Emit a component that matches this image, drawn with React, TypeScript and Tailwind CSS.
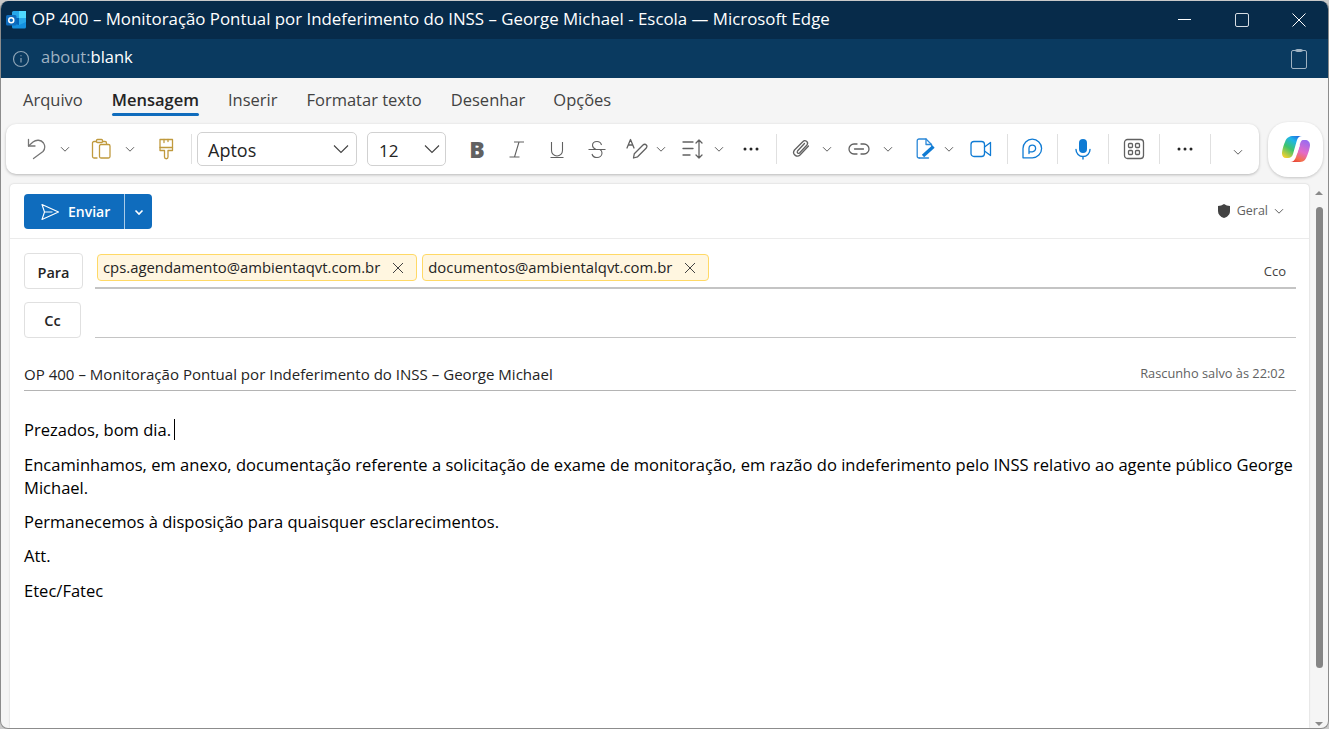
const ui = { fontFamily: '"Open Sans", "Noto Sans", sans-serif' }

function Chev({ className = '' }: { className?: string }) {
  return (
    <svg viewBox="0 0 12 12" className={`w-3 h-3 shrink-0 ${className}`} fill="none" stroke="#616161" strokeWidth="1">
      <path d="M2 4.200 6 8.200 10 4.200" />
    </svg>
  )
}

function BigChev() {
  return (
    <svg viewBox="0 0 16 10" className="w-4 h-[10px] shrink-0" fill="none" stroke="#424242" strokeWidth="1.100">
      <path d="M1 1.500 8 8.500 15 1.500" />
    </svg>
  )
}

function Divider({ className = '' }: { className?: string }) {
  return <div className={`w-px h-[30px] bg-[#e0e0e0] shrink-0 ${className}`} />
}

function Icon({ className = '', children }: { className?: string; children: React.ReactNode }) {
  return (
    <svg viewBox="0 0 22 22" className={`w-[22px] h-[22px] shrink-0 ${className}`} fill="none" stroke="currentColor" strokeWidth="1.300" strokeLinecap="round" strokeLinejoin="round">
      {children}
    </svg>
  )
}

function Dots({ className = '' }: { className?: string }) {
  return (
    <svg viewBox="0 0 20 20" className={`w-5 h-5 shrink-0 ${className}`} fill="#242424">
      <circle cx="4" cy="10" r="1.500" />
      <circle cx="10" cy="10" r="1.500" />
      <circle cx="16" cy="10" r="1.500" />
    </svg>
  )
}

function Chip({ email }: { email: string }) {
  return (
    <div className="h-[27px] flex items-center rounded-[4px] border border-[#ffd966] bg-[#fff6e0] pl-[5px] pr-[12px] text-[14.850px] text-[#242424] whitespace-nowrap">
      <span>{email}</span>
      <svg viewBox="0 0 12 12" className="w-3 h-3 ml-3" fill="none" stroke="#424242" strokeWidth="1">
        <path d="M1 1 11 11M11 1 1 11" />
      </svg>
    </div>
  )
}

function Toolbar() {
  return (
    <div className="ml-[5px] w-[1253px] h-[50px] bg-white rounded-[10px] shadow-[0_1px_3px_rgba(0,0,0,0.25)] flex items-center text-[#616161]">
      <Icon className="ml-5 text-[#757575]">
        <path d="M2.500 1.500V8H9" />
        <path d="M2.500 8 7 4c3-2.500 8-2.500 10.500 1 2 3 1.500 6-.5 8.500L7.500 20.500" />
      </Icon>
      <Chev className="ml-[11px]" />
      <Icon className="ml-[19px] text-[#c09a3e]">
        <path d="M6.500 3.500H4A1.500 1.500 0 0 0 2.500 5v13.500A1.500 1.500 0 0 0 4 20h3" />
        <path d="M12.500 3.500H15A1.500 1.500 0 0 1 16.500 5v1" />
        <rect x="6.500" y="1.500" width="6" height="3" rx="1" />
        <rect x="9.500" y="6.500" width="10.500" height="13.500" rx="1.500" />
      </Icon>
      <Chev className="ml-3" />
      <Icon className="ml-[19px] text-[#c09a3e]">
        <rect x="5" y="1.500" width="12.500" height="8" />
        <path d="M9 1.500v3M13 1.500v2" />
        <path d="M5 9.500v3h4.500v6.500a1.700 1.700 0 0 0 3.500 0v-6.500h4.500v-3" />
      </Icon>
      <Divider className="ml-[14px]" />
      <div className="ml-[5px] w-40 h-[34px] rounded-[5px] border border-[#d1d1d1] flex items-center justify-between pl-[10px] pr-[7px] text-[18px] text-[#242424]">
        <span className="pt-[3px]">Aptos</span>
        <BigChev />
      </div>
      <div className="ml-[10px] w-[79px] h-[34px] rounded-[5px] border border-[#d1d1d1] flex items-center justify-between pl-[11px] pr-[5px] text-[17px] text-[#242424]">
        <span className="pt-[3px]">12</span>
        <BigChev />
      </div>
      <span className="ml-[21px] w-5 text-center text-[23px] leading-none font-extrabold text-[#616161]">B</span>
      <svg viewBox="0 0 20 20" className="ml-5 w-5 h-5 shrink-0" fill="none" stroke="#616161" strokeWidth="1.100">
        <path d="M7 3h10M2.500 18h10M12 3 7.500 18" />
      </svg>
      <svg viewBox="0 0 20 20" className="ml-5 w-5 h-5 shrink-0" fill="none" stroke="#616161" strokeWidth="1.100">
        <path d="M4.500 3v8.500a5.500 5.500 0 0 0 11 0V3M3.500 18.500h13" />
      </svg>
      <svg viewBox="0 0 20 20" className="ml-5 w-5 h-5 shrink-0" fill="none" stroke="#616161" strokeWidth="1.100">
        <path d="M1.500 10.500h17" />
        <path d="M14.500 6C14 4 12 2.500 10 2.500 7 2.500 5.500 4.500 5.500 6.500c0 2 1.500 3 3.500 4M13 10.500c1.500 1 2 2 2 3.500 0 3-2.500 4.500-5 4.500S5.500 17 5 15" />
      </svg>
      <Icon className="ml-[19px] text-[#616161]">
        <path d="M1 10 4.500 1.500 8 10M2.300 7h4.400" />
        <path d="M7.500 20l.8-4.300L17 7c1-1 2.500-1 3.300 0 .8.800.7 2 0 3l-8.700 8.800z" />
      </Icon>
      <Chev className="ml-[7px]" />
      <Icon className="ml-[15px] text-[#616161]">
        <path d="M1 4h10M1 10.500h10M1 17h7" />
        <path d="M17 2v18M14 5l3-3 3 3M14 17l3 3 3-3" />
      </Icon>
      <Chev className="ml-[9px]" />
      <Dots className="ml-4" />
      <Divider className="ml-[15px]" />
      <Icon className="ml-[13px] text-[#616161]">
        <path d="M18.500 8 10 17c-3 3-8.500-1-5.500-5L13 3.500c2-2.200 6 .5 4 3.500L9.500 15c-1.200 1-3-.5-2-2l7-7.500" />
      </Icon>
      <Chev className="ml-[9px]" />
      <Icon className="ml-[15px] text-[#616161]">
        <path d="M9 6H6a5 5 0 0 0 0 10h3M13 6h3a5 5 0 0 1 0 10h-3M6.500 11h9" />
      </Icon>
      <Chev className="ml-3" />
      <Icon className="ml-5 text-[#2b88d8]">
        <path d="M5.500 20H5A1.800 1.800 0 0 1 3.200 18.200V2.800A1.800 1.800 0 0 1 5 1h7l5.500 5.500V8" />
        <path d="M12 1v5.500h5.500" />
        <path d="M5.500 20h9" />
        <path d="M9 18 19.500 8.500" stroke="#0f7bd4" strokeWidth="3.400" strokeLinecap="butt" />
      </Icon>
      <Chev className="ml-[7px]" />
      <Icon className="ml-[15px] text-[#0f7bd4]">
        <rect x="1" y="3.500" width="13.500" height="15" rx="3" />
        <path d="M14.500 9 20.500 4.500v13l-6-4.500" />
      </Icon>
      <Divider className="ml-[15px]" />
      <Icon className="ml-[13px] text-[#0f7bd4]">
        <path d="M2 19.800V10.500a9.300 9.300 0 1 1 9.300 9.300z" />
        <path d="M8 15.500v-5a3.300 3.300 0 1 1 3.300 3.300H8.500" />
      </Icon>
      <Divider className="ml-[14px]" />
      <svg viewBox="0 0 22 22" className="ml-[14px] w-[22px] h-[22px] shrink-0">
        <rect x="7" y="1" width="8" height="14" rx="4" fill="#0f7bd4" />
        <path d="M4 11.500a7 7 0 0 0 14 0M11 18.500V21" fill="none" stroke="#0f7bd4" strokeWidth="1.400" strokeLinecap="round" />
      </svg>
      <Divider className="ml-[14px]" />
      <Icon className="ml-[14px] text-[#616161]">
        <rect x="1.500" y="1.500" width="19" height="19" rx="3" />
        <rect x="5.500" y="5.500" width="4" height="4" rx="1" />
        <rect x="12.500" y="5.500" width="4" height="4" rx="1" />
        <rect x="5.500" y="12.500" width="4" height="4" rx="1" />
        <rect x="12.500" y="12.500" width="4" height="4" rx="1" />
      </Icon>
      <Divider className="ml-[14px]" />
      <Dots className="ml-[15px]" />
      <Divider className="ml-[15px]" />
      <Chev className="ml-[21px] mt-[6px]" />
    </div>
  )
}

function CopilotLogo() {
  return (
    <svg viewBox="0 0 28 26" className="w-7 h-[26px]">
      <defs>
        <linearGradient id="cpLeft" x1="0.800" y1="0" x2="0.200" y2="1">
          <stop offset="0" stopColor="#1f6fe0" />
          <stop offset="0.250" stopColor="#1fb6e8" />
          <stop offset="0.600" stopColor="#3fc46a" />
          <stop offset="1" stopColor="#f2d030" />
        </linearGradient>
        <linearGradient id="cpRight" x1="0.700" y1="0" x2="0.300" y2="1">
          <stop offset="0" stopColor="#9a6cf0" />
          <stop offset="0.500" stopColor="#e46ac8" />
          <stop offset="0.850" stopColor="#f4704c" />
          <stop offset="1" stopColor="#e8483c" />
        </linearGradient>
      </defs>
      <path d="M7 1c1-.7 2-1 3-1h10c-2.500 0-4 1.500-5 4l-4 14c-.7 2.500-2.500 4-5 4H4c-2.500 0-4-2-4-4.500C0 15 1.500 9 3 6c1-3 2-4 4-5z" fill="url(#cpLeft)" />
      <path d="M21 4h2c3 0 5 2 5 5 0 2-1.500 8-3 11-1 3-3 6-7 6H8c3 0 5-2 6-5l4-13c.5-2 1.500-4 3-4z" fill="url(#cpRight)" />
      <path d="M15.500 9.500c.6-1.200 2.500-.8 2.200.6l-2.700 8c-.5 1.300-2.800 1-2.400-.5z" fill="#ffffff" />
    </svg>
  )
}

function Composer() {
  return (
    <div className="ml-[9px] mt-[10px] w-[1299px] bg-white rounded-t-[4px] shadow-[0_0_2px_rgba(0,0,0,0.2)] flex flex-col text-[#242424] overflow-hidden">
      <div className="h-[55px] shrink-0 border-b border-[#ebebeb] flex items-center pl-[14px] pr-[24px]">
        <div className="flex h-[35px] mt-px rounded-[4px] bg-[#0f6cbd] text-white">
          <div className="w-[100px] flex items-center pl-4 gap-[8px]">
            <svg viewBox="0 0 20 20" className="w-5 h-5" fill="none" stroke="#fff" strokeWidth="1.100" strokeLinejoin="round">
              <path d="M2 2.500 18.500 10 2 17.500 4.500 10zM4.500 10h8" />
            </svg>
            <span className="text-[14px] font-semibold">Enviar</span>
          </div>
          <div className="w-[28px] border-l border-[#a9cbe8] flex items-center justify-center">
            <svg viewBox="0 0 12 12" className="w-3 h-3" fill="none" stroke="#fff" strokeWidth="1.600">
              <path d="M2.500 4.500 6 8 9.500 4.500" />
            </svg>
          </div>
        </div>
        <div className="ml-auto flex items-center text-[12.500px] text-[#616161]">
          <svg viewBox="0 0 14 16" className="w-[14px] h-4 mr-[6px]" fill="#424242">
            <path d="M7 1c1.800 1.300 3.800 2 6 2v5c0 3.500-2.300 5.800-6 7-3.700-1.200-6-3.500-6-7V3c2.200 0 4.200-.7 6-2z" />
          </svg>
          <span>Geral</span>
          <Chev className="ml-[5px]" />
        </div>
      </div>

      <div className="h-[49px] shrink-0 flex pl-[14px] pr-[13px] pt-[14px]">
        <div className="w-[59px] h-[36px] rounded-[4px] border border-[#e0e0e0] flex items-center justify-center pt-[3px] text-[14.500px] font-semibold">Para</div>
        <div className="ml-[12px] flex-1 h-[36px] border-b-2 border-[#c4c4c4] flex pl-[2px]">
          <div className="flex gap-[5px] mt-px h-[27px]">
            <Chip email="cps.agendamento@ambientaqvt.com.br" />
            <Chip email="documentos@ambientalqvt.com.br" />
          </div>
          <span className="ml-auto mt-[9px] pr-[10px] text-[13px] text-[#424242]">Cco</span>
        </div>
      </div>

      <div className="h-[49px] shrink-0 flex pl-[14px] pr-[13px] pt-[14px]">
        <div className="w-[57px] h-[36px] rounded-[4px] border border-[#e0e0e0] flex items-center justify-center pt-[2px] text-[14.500px] font-semibold">Cc</div>
        <div className="ml-[14px] flex-1 h-[36px] border-b border-[#c4c4c4]" />
      </div>

      <div className="ml-[14px] mr-[13px] mt-[4px] h-[50px] shrink-0 border-b border-[#b4b4b4] flex items-center justify-between pr-[11px] pt-[17px]">
        <span className="text-[15.050px]">OP 400 – Monitoração Pontual por Indeferimento do INSS – George Michael</span>
        <span className="text-[12.800px] text-[#616161]">Rascunho salvo às 22:02</span>
      </div>

      <div className="pl-[14px] pr-[5px] pt-[27px] text-[16.560px] leading-[23px] text-black">
        <p className="flex items-center">Prezados, bom dia.<span className="ml-[3px] w-px h-[21px] bg-black" /></p>
        <p className="mt-[12px]">Encaminhamos, em anexo, documentação referente a solicitação de exame de monitoração, em razão do indeferimento pelo INSS relativo ao agente público George Michael.</p>
        <p className="mt-[11px]">Permanecemos à disposição para quaisquer esclarecimentos.</p>
        <p className="mt-[11px]">Att.</p>
        <p className="mt-[12px]">Etec/Fatec</p>
      </div>
    </div>
  )
}

export default function App() {
  return (
    <div className="w-[1329px] h-[729px] overflow-hidden bg-[#c9c9c9]" style={ui}>
      <div className="w-full h-[728px] mt-px rounded-[8px] border-x border-b border-[#8c8c8c] overflow-hidden bg-[#f5f5f5] flex flex-col">
        <div className="h-[38px] shrink-0 bg-[#072b4a] flex items-center pl-[5px] text-white">
          <svg viewBox="0 0 20 18" className="w-5 h-[18px] shrink-0 mt-[-1px]">
            <rect x="6" y="0" width="14" height="14" rx="1.500" fill="#28a8ea" />
            <rect x="13" y="0" width="7" height="7" fill="#50d9ff" />
            <rect x="6" y="7" width="7" height="7" fill="#0364b8" />
            <path d="M6 12 13 14 20 11V16a1.500 1.500 0 0 1-1.500 1.500H7.500A1.500 1.500 0 0 1 6 16z" fill="#1490df" />
            <rect x="0" y="4" width="10.500" height="10.500" rx="1.500" fill="#0f6cbd" />
            <circle cx="5.250" cy="9.250" r="2.500" fill="none" stroke="#fff" strokeWidth="1.500" />
          </svg>
          <span className="ml-[6px] mb-[3px] text-[16.850px] whitespace-nowrap">OP 400 – Monitoração Pontual por Indeferimento do INSS – George Michael - Escola — Microsoft Edge</span>
          <div className="ml-auto flex items-center pr-[22px] mb-px">
            <div className="w-[13px] h-px bg-white" />
            <div className="ml-[44px] w-[14px] h-[14px] border border-[#d6dde3] rounded-[2px]" />
            <svg viewBox="0 0 14 14" className="ml-[43px] w-[14px] h-[14px]" fill="none" stroke="#fff" strokeWidth="1">
              <path d="M.5.5 13.500 13.500M13.500.5.5 13.500" />
            </svg>
          </div>
        </div>

        <div className="h-[39px] shrink-0 bg-[#0a3a60] flex items-center pl-[11px] pr-[21px]">
          <svg viewBox="0 0 18 18" className="w-[18px] h-[18px]" fill="none" stroke="#8ea4b6" strokeWidth="1.200">
            <circle cx="9" cy="9" r="7.500" />
            <path d="M9 8v4.500M9 5.300v1" />
          </svg>
          <span className="ml-[11px] mb-[2px] text-[16.500px] text-[#9fb2c2]">about:<span className="text-white">blank</span></span>
          <svg viewBox="0 0 16 20" className="ml-auto w-4 h-5" fill="none" stroke="#9fb2c2" strokeWidth="1">
            <rect x=".5" y="1.500" width="15" height="18" rx="1.500" />
            <rect x="4.500" y=".5" width="7" height="2" rx="1" />
          </svg>
        </div>

        <div className="h-[46px] shrink-0 flex items-start pl-[22px] pt-[10px] text-[16.500px] text-[#424242]">
          <span>Arquivo</span>
          <div className="ml-[29px] flex flex-col items-stretch">
            <span className="font-semibold text-[#242424]">Mensagem</span>
            <div className="h-[3px] rounded-[2px] bg-[#0f6cbd]" />
          </div>
          <span className="ml-[29px]">Inserir</span>
          <span className="ml-[29px]">Formatar texto</span>
          <span className="ml-[29px]">Desenhar</span>
          <span className="ml-[28px]">Opções</span>
        </div>

        <div className="flex items-center">
          <Toolbar />
          <div className="ml-[9px] -my-[3px] w-[55px] h-[55px] rounded-[20px] bg-white shadow-[0_1px_3px_rgba(0,0,0,0.2)] flex items-center justify-center">
            <CopilotLogo />
          </div>
        </div>

        <div className="flex-1 flex min-h-0">
          <Composer />
          <div className="ml-[6px] mt-[10px] w-[8px] flex flex-col items-center">
            <div className="w-0 h-0 mt-[7px] border-x-[4px] border-x-transparent border-b-[4px] border-b-[#8a8a8a]" />
            <div className="w-[7px] h-[461px] mt-[12px] rounded-full bg-[#858585]" />
            <div className="mt-auto mb-[2px] w-0 h-0 border-x-[4px] border-x-transparent border-t-[4px] border-t-[#8a8a8a]" />
          </div>
        </div>
      </div>
    </div>
  )
}
